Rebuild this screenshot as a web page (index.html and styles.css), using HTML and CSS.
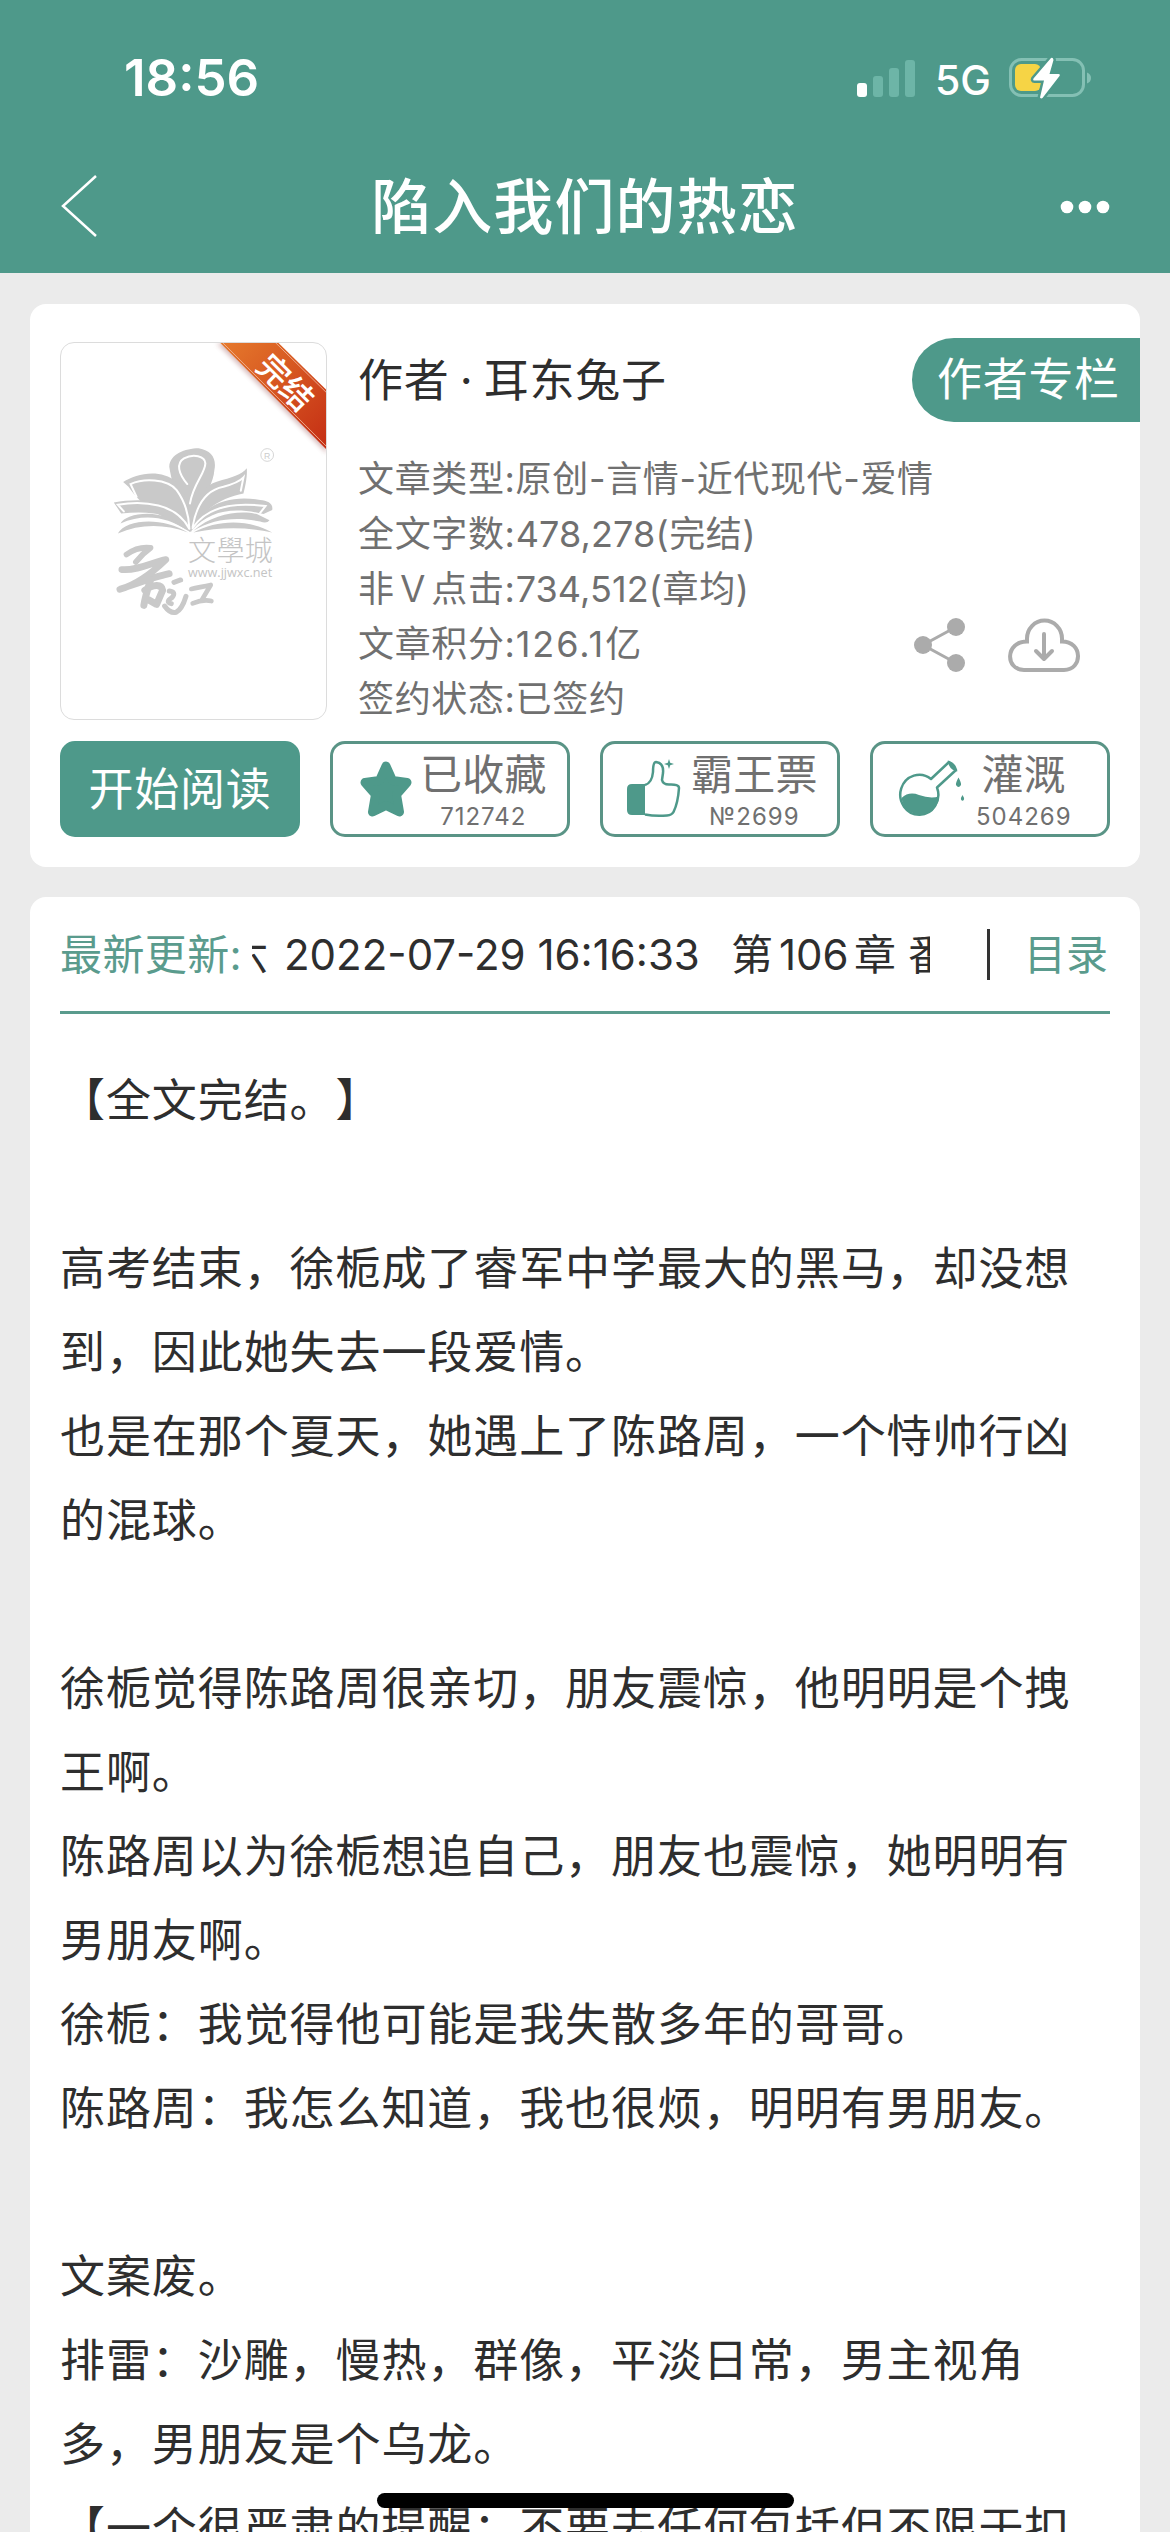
FILE: index.html
```
<!DOCTYPE html>
<html lang="zh-CN">
<head>
<meta charset="utf-8">
<title>陷入我们的热恋</title>
<link rel="stylesheet" href="styles.css">
</head>
<body>
<div class="screen">
  <header class="header">
    <div class="status">
      <span class="time">18:56</span>
      <div class="status-right">
        <svg class="signal" viewBox="0 0 58 37"><rect x="0" y="23" width="10" height="14" rx="3" fill="#fff"/><g fill="#6db5a7"><rect x="16" y="16" width="10" height="21" rx="3"/><rect x="32" y="8" width="10" height="29" rx="3"/><rect x="48" y="0" width="10" height="37" rx="3"/></g></svg>
        <span class="net">5G</span>
        <svg class="battery" viewBox="0 0 84 44"><rect x="1.5" y="3.5" width="73" height="36" rx="11" fill="none" stroke="#84c0b4" stroke-width="3"/><path d="M78 16.500q4 1.500 4 5.500t-4 5.500z" fill="#84c0b4"/><rect x="6" y="8" width="26" height="27" rx="6" fill="#f6d445"/><path d="M42 2 24.500 22.500q-1 2 1 2h9.500l-4 17q1 1.500 2.500 .5L50.500 20q1-2-1-2H40.500l4-14q-.5-3-2.500-2z" fill="#fff" stroke="#4e998a" stroke-width="5" paint-order="stroke" stroke-linejoin="round"/></svg>
      </div>
    </div>
    <div class="nav">
      <svg class="back" viewBox="0 0 38 64"><path d="M36 2 3 32 36 62" fill="none" stroke="#fff" stroke-width="2.500"/></svg>
      <h1 class="title">陷入我们的热恋</h1>
      <svg class="more" viewBox="0 0 50 14" fill="#fff"><circle cx="7" cy="7" r="6.300"/><circle cx="25" cy="7" r="6.300"/><circle cx="43" cy="7" r="6.300"/></svg>
    </div>
  </header>

  <section class="card book">
    <div class="summary">
      <div class="cover">
        <svg class="cover-art" viewBox="94 130 793 1125">
          <defs><linearGradient id="rib" x1="0" y1="0" x2="1" y2="1"><stop offset="0" stop-color="#e67a2c"/><stop offset="1" stop-color="#c42d14"/></linearGradient>
          <filter id="soft" x="-20%" y="-20%" width="140%" height="140%"><feGaussianBlur stdDeviation="8"/></filter></defs>
          <path d="M560 130 890 460V350L680 130z" fill="#b88" opacity=".6" filter="url(#soft)"/>
          <path d="M568 127H742L890 272V450z" fill="url(#rib)"/>
          <path d="M576 127 890 441M734 127 890 280" fill="none" stroke="#f0b9a0" stroke-width="2.500"/>
          <text class="ribbon-text" transform="translate(766 248) rotate(45)" text-anchor="middle" y="35">完结</text>
          <g fill="#c9c9c9">
            <path d="M478 694C440 600 425 545 418 500 420 462 465 446 506 445 545 452 560 476 553 510 550 560 505 610 484 694z"/>
            <path d="M478 694C420 655 350 640 296 560L280 546C320 520 390 505 440 545 470 580 480 640 482 694z"/>
            <path d="M484 694C490 620 510 560 560 545 605 532 635 525 650 505 652 530 645 560 640 580 585 590 520 620 484 694z"/>
            <path d="M478 690C430 640 360 632 274 640L252 607C330 595 430 590 480 690z"/>
            <path d="M486 690C520 600 620 585 690 600 712 602 730 610 726 630L700 642C610 620 540 630 486 690z"/>
            <path d="M474 692C410 648 340 640 272 670 290 635 410 620 474 692zM474 697C400 670 330 672 264 700 290 655 400 650 474 697zM490 692C550 640 630 630 680 642L718 660Q710 672 690 664C620 650 550 655 490 692zM490 697C560 660 650 655 726 697 650 680 570 680 490 697z"/>
          </g>
          <g fill="none" stroke="#fff" stroke-width="6" stroke-linecap="round">
            <path d="M472 552C445 520 438 490 462 475 490 460 525 468 526 490 526 520 490 550 480 610"/>
            <path d="M320 590 302 552C340 535 410 535 440 570 462 600 476 640 478 684"/>
            <path d="M488 680C500 610 530 570 580 560 610 552 628 545 640 532L632 572"/>
            <path d="M282 634 264 614C340 600 440 610 478 686M488 684C530 620 610 605 706 618L690 638"/>
          </g>
          <circle cx="711" cy="465" r="19" fill="none" stroke="#ccc" stroke-width="2.500"/>
          <text class="reg" x="711" y="476" text-anchor="middle">R</text>
          <text class="city" x="474" y="782" textLength="254">文學城</text>
          <text class="site" x="474" y="829" textLength="252" lengthAdjust="spacingAndGlyphs">www.jjwxc.net</text>
          <g fill="none" stroke="#c9c9c9" stroke-linecap="round" stroke-linejoin="round">
            <path stroke-width="17" d="M290 763C315 745 338 740 362 743 345 755 330 770 318 785"/>
            <path stroke-width="20" d="M276 808C325 812 370 785 408 778 380 805 330 850 270 867 320 850 370 830 418 820"/>
            <path stroke-width="21" d="M362 838C352 870 345 895 342 915M345 870C370 852 395 850 398 870L380 912 355 898"/>
            <path stroke-width="15" d="M432 846 452 839M418 872Q440 875 426 892Q405 905 424 910M404 917Q420 940 438 936 456 928 468 888"/>
            <path stroke-width="14" d="M484 866C505 862 520 858 542 854L516 898M488 909C510 900 525 898 544 902"/>
          </g>
        </svg>
      </div>
      <div class="info">
        <div class="author-row">
          <span class="author">作者 · 耳东兔子</span>
          <span class="column-link">作者专栏</span>
        </div>
        <div class="meta-row">
          <div class="meta">
            <p>文章类型:原创-言情-近代现代-爱情</p>
            <p>全文字数:<span class="n">478,278</span>(完结)</p>
            <p>非Ｖ点击:<span class="n">734,512</span>(章均)</p>
            <p>文章积分:<span class="score">126.1</span>亿</p>
            <p>签约状态:已签约</p>
          </div>
          <div class="tools">
            <svg class="share" viewBox="0 0 54 54"><path d="M43 9 10 27 43 45" fill="none" stroke="#ababab" stroke-width="3"/><g fill="#ababab"><circle cx="43" cy="9" r="9"/><circle cx="10" cy="27" r="9"/><circle cx="43" cy="45" r="9"/></g></svg>
            <svg class="cloud" viewBox="0 0 74 56"><path d="M16 52H56C75 52 75 23.500 54 23.500V20.500A17.500 18 0 0 0 19 20.500V23.500C-3 23.500-3 52 16 52z" fill="none" stroke="#ababab" stroke-width="4"/><path d="M36 16V40M28 33 36 41 44 33" fill="none" stroke="#ababab" stroke-width="4" stroke-linecap="round" stroke-linejoin="round"/></svg>
          </div>
        </div>
      </div>
    </div>
    <div class="actions">
      <div class="btn btn-fill">开始阅读</div>
      <div class="btn btn-star">
        <svg class="ico-star" viewBox="0 0 52 58"><path d="M26 6 32.500 20.500 47 22.500 36.500 34.500 39.500 52 26 45.500 12.500 52 15.500 34.500 5 22.500 19.500 20.500z" fill="#4e998a" stroke="#4e998a" stroke-width="9" stroke-linejoin="round"/></svg>
        <div class="lab"><b>已收藏</b><i>712742</i></div>
      </div>
      <div class="btn btn-thumb">
        <svg class="ico-thumb" viewBox="0 0 54 60"><path d="M5 25H18V56H5Q0 56 0 51V30Q0 25 5 25z" fill="#4e998a"/><path d="M18 26Q25 24 26 13 26 3 29 3 37 4 36 14L35 21Q36 25.500 42 25.500 52 25 52 29 51 44 46.500 53 45 56 40 56.500 28 57.500 18 55.500" fill="none" stroke="#4e998a" stroke-width="2.500"/><path d="M42 0 43.200 3.800 47 5 43.200 6.200 42 10 40.800 6.200 37 5 40.800 3.800z" fill="#4e998a"/></svg>
        <div class="lab"><b>霸王票</b><i>№2699</i></div>
      </div>
      <div class="btn btn-flask">
        <svg class="ico-flask" viewBox="0 0 66 60"><path d="M31 20 49 3 56 11 37 28.500A19 20 0 1 1 31 20z" fill="none" stroke="#4e998a" stroke-width="2.500" stroke-linejoin="round"/><path d="M49 3Q50 9 56 11 55 5 49 3z" fill="none" stroke="#4e998a" stroke-width="2"/><path d="M1.500 39Q9 32 19 36 30 40 39 37.500 37 54.500 20.500 55.500 4 54.500 1.500 39z" fill="#4e998a"/><path d="M58.500 18.500Q61.500 24 61 26 58.500 30 56 26 55.500 24 58.500 18.500zM62.500 36Q64.500 39 64 40.500 62.500 43 61 40.500 60.500 39 62.500 36z" fill="#4e998a"/></svg>
        <div class="lab"><b>灌溉</b><i>504269</i></div>
      </div>
    </div>
  </section>

  <section class="card detail">
    <div class="update">
      <span class="update-label">最新更新:</span>
      <div class="ticker"><span class="t0">六</span><span class="t1">2022-07-29 16:16:33</span><span class="t2">第</span><span class="t3">106</span><span class="t4">章</span><span class="t5">番</span></div>
      <span class="bar"></span>
      <span class="toc">目录</span>
    </div>
    <div class="story">
      <p>【全文完结。】</p>
      <p><br></p>
      <p>高考结束，徐栀成了睿军中学最大的黑马，却没想<br>到，因此她失去一段爱情。</p>
      <p>也是在那个夏天，她遇上了陈路周，一个恃帅行凶<br>的混球。</p>
      <p><br></p>
      <p>徐栀觉得陈路周很亲切，朋友震惊，他明明是个拽<br>王啊。</p>
      <p>陈路周以为徐栀想追自己，朋友也震惊，她明明有<br>男朋友啊。</p>
      <p>徐栀：我觉得他可能是我失散多年的哥哥。</p>
      <p>陈路周：我怎么知道，我也很烦，明明有男朋友。</p>
      <p><br></p>
      <p>文案废。</p>
      <p>排雷：沙雕，慢热，群像，平淡日常，男主视角<br>多，男朋友是个乌龙。</p>
      <p>【一个很严肃的提醒：不要去任何包括但不限于扣</p>
    </div>
  </section>
  <div class="home-indicator"></div>
</div>
</body>
</html>
```
FILE: styles.css
```
* { box-sizing: border-box; margin: 0; padding: 0; }
body { background: #ebebeb; font-family: Inter, "Noto Sans CJK SC", sans-serif; color: #2e2e2e; }
svg { display: block; flex: none; overflow: visible; }
.screen { position: relative; width: 1170px; height: 2532px; overflow: hidden; background: #ebebeb; display: flex; flex-direction: column; gap: 30px; text-spacing-trim: space-all; white-space: nowrap; }
.header { height: 273px; margin-bottom: 1px; flex: none; background: #4e998a; color: #fff; }
.status { height: 156px; padding: 0 77px 0 124px; display: flex; justify-content: space-between; align-items: center; }
.time { font-size: 51px; font-weight: 600; line-height: 60px; }
.status-right { display: flex; align-items: center; }
.signal { width: 58px; height: 37px; }
.net { font-size: 41px; font-weight: 500; line-height: 48px; margin: 3px 0 0 20px; width: 53px; }
.battery { width: 84px; height: 44px; margin-left: 21px; }
.nav { height: 102px; padding: 0 60px; display: flex; justify-content: space-between; align-items: center; }
.back { width: 38px; height: 64px; margin-top: -2px; }
.title { font-size: 60px; font-weight: 500; letter-spacing: 1.1px; line-height: 90px; margin-left: 12px; }
.more { width: 50px; height: 14px; }
.card { margin: 0 30px; background: #fff; border-radius: 16px; flex: none; }
.book { height: 563px; padding-top: 34px; }
.summary { display: flex; height: 403px; }
.cover { width: 267px; height: 378px; margin: 4px 0 0 30px; border: 1px solid #dcdcdc; border-radius: 14px; overflow: hidden; flex: none; }
.cover-art { width: 265px; height: 376px; }
.ribbon-text { font: 500 96px "Noto Sans CJK SC", sans-serif; fill: #fff; }
.reg { font: 26px "Liberation Sans", sans-serif; fill: #ccc; }
.city { font: 300 84px "Noto Sans CJK TC", sans-serif; fill: #c4c4c4; }
.site { font: 38px "Open Sans", sans-serif; fill: #c4c4c4; }
.info { width: 782px; flex: none; margin-left: 31px; }
.author-row { height: 84px; display: flex; justify-content: space-between; align-items: center; font-size: 45px; letter-spacing: .7px; }
.author { word-spacing: -3px; margin-top: -6px; }
.column-link { width: 228px; height: 84px; line-height: 84px; padding-left: 25px; border-radius: 42px 0 0 42px; background: #4e998a; color: #fff; }
.meta-row { display: flex; margin-top: 28px; }
.meta { width: 555px; flex: none; padding-top: 2px; font-size: 36px; line-height: 55px; letter-spacing: .65px; color: #707070; }
.n { letter-spacing: .1px; }
.score { letter-spacing: 2px; }
.tools { display: flex; gap: 41px; padding-top: 168px; }
.share { width: 54px; height: 54px; }
.cloud { width: 74px; height: 56px; }
.actions { display: grid; grid-template-columns: repeat(4, 240px); gap: 30px; padding-left: 30px; }
.btn { height: 96px; border: 3px solid #5a9486; border-radius: 15px; display: flex; align-items: center; }
.btn-fill { background: #4e998a; border-color: #4e998a; color: #fff; font-size: 45px; letter-spacing: .7px; justify-content: center; padding-bottom: 5px; }
.ico-star { width: 52px; height: 58px; }
.ico-thumb { width: 54px; height: 60px; }
.ico-flask { width: 66px; height: 60px; }
.btn-star { padding-left: 27px; gap: 8px; }
.btn-thumb { padding-left: 24px; gap: 10px; }
.btn-flask { padding-left: 27px; gap: 10px; }
.lab { display: flex; flex-direction: column; align-items: center; color: #707070; padding-top: 4px; }
.lab b { font-weight: 400; font-size: 42px; line-height: 42px; letter-spacing: .2px; }
.lab i { font-style: normal; font-size: 24px; line-height: 24px; margin-top: 9px; letter-spacing: 1px; }
.detail { height: 1700px; padding: 0 30px; }
.update { height: 117px; border-bottom: 3px solid #5a9b8d; display: flex; align-items: center; font-size: 42px; line-height: 60px; color: #2e2e2e; padding-top: 2px; }
.update-label, .toc { color: #5a9b8d; }
.update-label { width: 192px; flex: none; letter-spacing: .4px; }
.ticker { width: 678px; overflow: hidden; display: flex; flex: none; }
.t0 { margin-left: -26px; width: 58px; flex: none; }
.t1 { width: 447px; flex: none; }
.t2 { width: 48px; flex: none; }
.t3 { width: 75px; flex: none; }
.t4 { width: 54px; flex: none; }
.t5 { flex: none; }
.bar { width: 3px; height: 51px; background: #333; margin-left: 57px; margin-top: -2px; }
.toc { margin-left: 34px; }
.story { padding-top: 45px; font-size: 45px; letter-spacing: .92px; line-height: 84px; }
.home-indicator { position: absolute; left: 377px; top: 2493px; width: 417px; height: 15px; border-radius: 8px; background: #000; }
```
